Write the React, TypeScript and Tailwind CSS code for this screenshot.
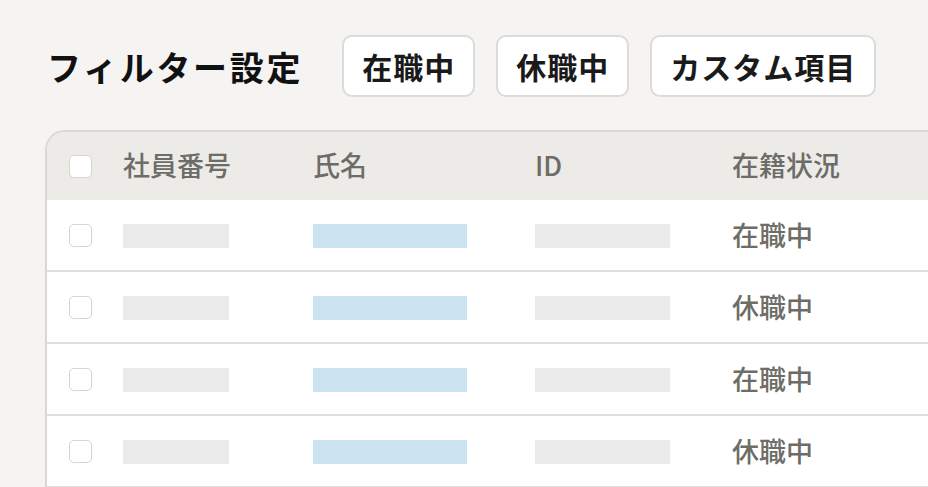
import React from 'react'

const font = { fontFamily: '"Noto Sans CJK JP", "Noto Sans", sans-serif' }

const rows = ['在職中', '休職中', '在職中', '休職中']

function Checkbox() {
  return <div className="h-[23px] w-[23px] rounded-[5px] border-[1.5px] border-[#d6d5d2] bg-white" />
}

function FilterButton({ label }: { label: string }) {
  return (
    <div className="flex h-[62px] items-center rounded-[10px] border-2 border-[#dcdbd8] bg-white px-[18px] text-[30px] font-bold tracking-[1px] text-[#1a1a1a]">
      {label}
    </div>
  )
}

export default function App() {
  return (
    <div style={font} className="h-[487px] w-[928px] overflow-hidden bg-[#f5f4f2] pl-[45px] pt-[35px]">
      <div className="flex items-center">
        <h1 className="ml-[2px] mr-[39px] text-[34px] font-bold tracking-[2.7px] text-[#111]">フィルター設定</h1>
        <div className="flex gap-[21px]">
          <FilterButton label="在職中" />
          <FilterButton label="休職中" />
          <FilterButton label="カスタム項目" />
        </div>
      </div>

      <div className="mt-[33px] w-[960px] overflow-hidden rounded-tl-[20px] border-l-2 border-t-2 border-[#d9d8d4] bg-white">
        <div className="grid h-[68px] grid-cols-[76px_190px_222px_197px_1fr] items-center bg-[#ecebe7] text-[27px] font-medium text-[#6e6c66]">
          <div className="pl-[22px]">
            <Checkbox />
          </div>
          <div className="-mt-[2px]">社員番号</div>
          <div className="-mt-[2px]">氏名</div>
          <div className="-mt-[2px]">ID</div>
          <div className="-mt-[2px]">在籍状況</div>
        </div>
        {rows.map((status, i) => (
          <div
            key={i}
            className="grid h-[72px] grid-cols-[76px_190px_222px_197px_1fr] items-center border-b-2 border-[#e0dfdc] text-[27px] font-medium text-[#6e6c66]"
          >
            <div className="pl-[22px]">
              <Checkbox />
            </div>
            <div className="mt-[2px] h-[24px] w-[106px] bg-[#ebebeb]" />
            <div className="mt-[2px] h-[24px] w-[154px] bg-[#cce3f2]" />
            <div className="mt-[2px] h-[24px] w-[135px] bg-[#ebebeb]" />
            <div>{status}</div>
          </div>
        ))}
      </div>
    </div>
  )
}
